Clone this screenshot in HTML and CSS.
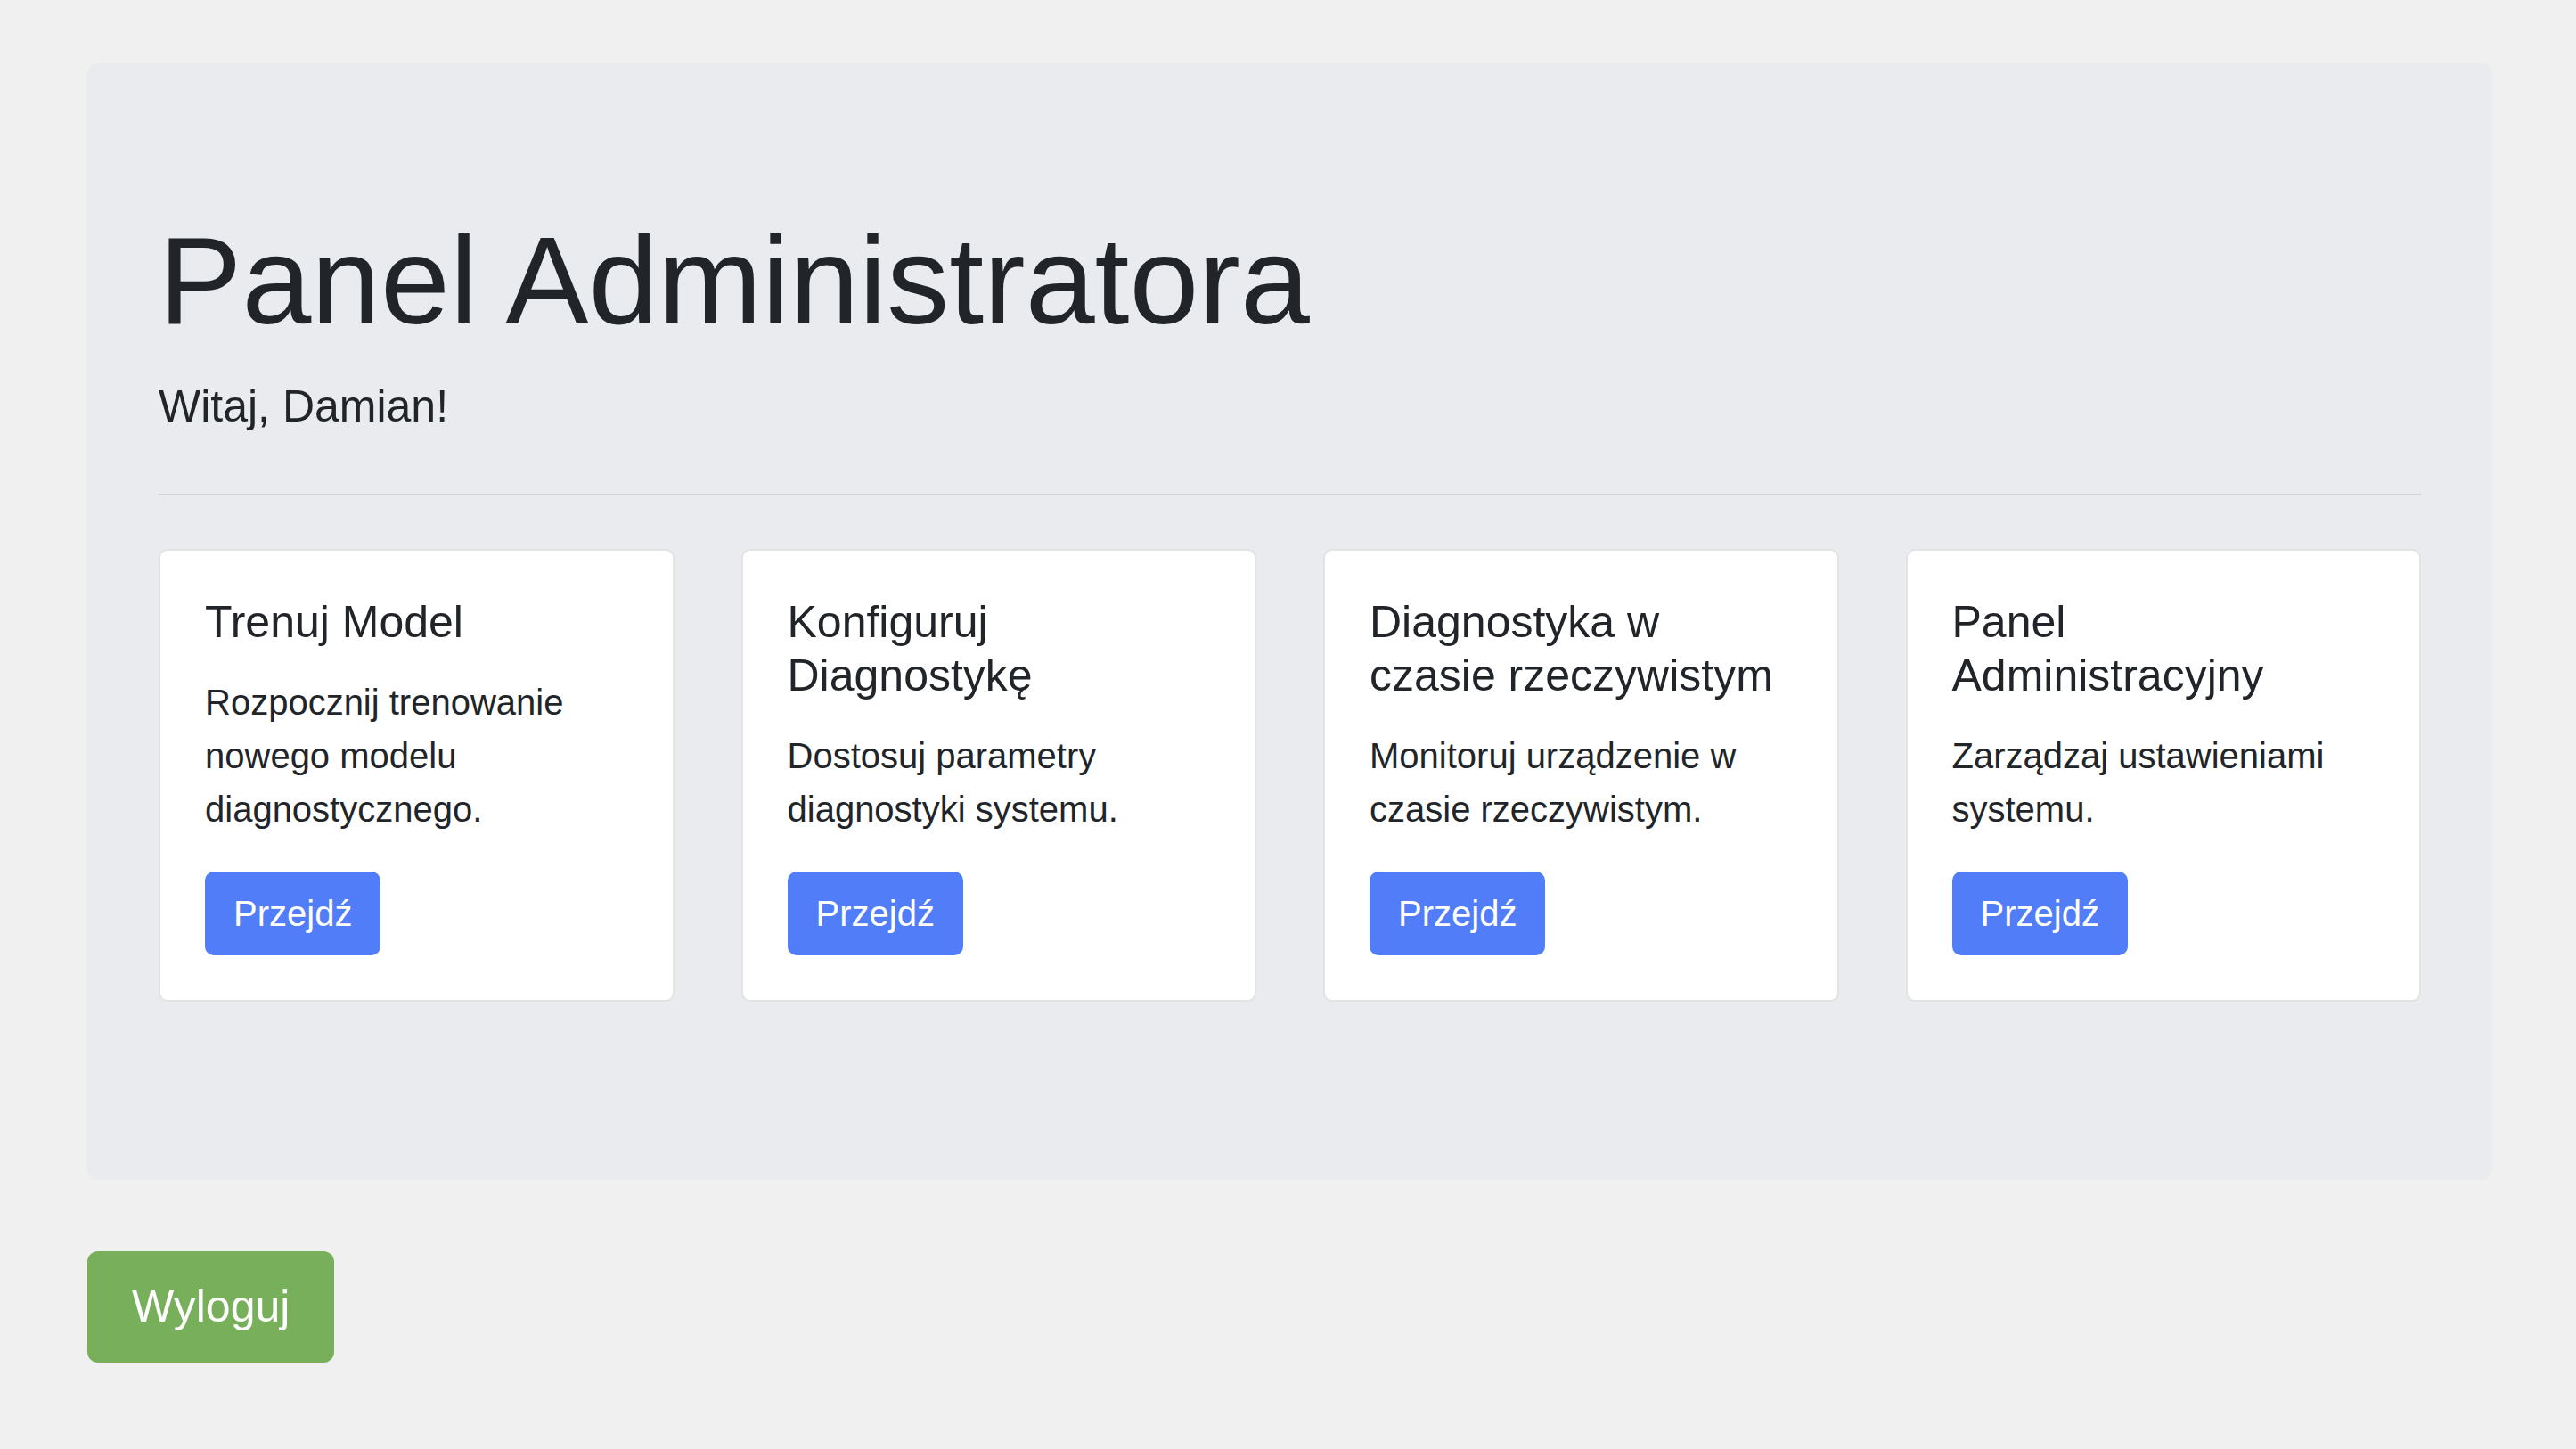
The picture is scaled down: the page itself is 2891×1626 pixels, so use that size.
FILE: index.html
```html
<!DOCTYPE html>
<html lang="pl">
<head>
<meta charset="utf-8">
<title>Panel Administratora</title>
<link rel="stylesheet" href="styles.css">
</head>
<body>
<div class="page">
  <div class="jumbotron">
    <h1 class="display">Panel Administratora</h1>
    <p class="lead">Witaj, Damian!</p>
    <hr class="divider">
    <div class="cards">
      <div class="card">
        <h5 class="card-title">Trenuj Model</h5>
        <p class="card-text">Rozpocznij trenowanie nowego modelu diagnostycznego.</p>
        <a class="btn-primary" href="#">Przejdź</a>
      </div>
      <div class="card">
        <h5 class="card-title">Konfiguruj Diagnostykę</h5>
        <p class="card-text">Dostosuj parametry diagnostyki systemu.</p>
        <a class="btn-primary" href="#">Przejdź</a>
      </div>
      <div class="card">
        <h5 class="card-title">Diagnostyka w czasie rzeczywistym</h5>
        <p class="card-text">Monitoruj urządzenie w czasie rzeczywistym.</p>
        <a class="btn-primary" href="#">Przejdź</a>
      </div>
      <div class="card">
        <h5 class="card-title">Panel Administracyjny</h5>
        <p class="card-text">Zarządzaj ustawieniami systemu.</p>
        <a class="btn-primary" href="#">Przejdź</a>
      </div>
    </div>
  </div>
  <a class="btn-logout" href="#">Wyloguj</a>
</div>
</body>
</html>
```

FILE: styles.css
```css
html, body {
  margin: 0;
  padding: 0;
}

body {
  background: #f0f0f0;
  color: #212529;
  font-family: "Liberation Sans", Arial, sans-serif;
  font-size: 40px;
  line-height: 1.5;
}

.page {
  padding: 71px 94px 60px 98px;
}

.jumbotron {
  background: #e9ebee;
  border-radius: 12px;
  padding: 160px 80px;
  margin-bottom: 80px;
}

.display {
  font-size: 140px;
  font-weight: 400;
  line-height: 168px;
  margin: 0 0 20px;
}

.lead {
  font-size: 50px;
  line-height: 75px;
  margin: 0 0 40px;
}

.divider {
  border: 0;
  border-top: 2px solid rgba(0, 0, 0, 0.1);
  height: 0;
  margin: 60px 0;
}

.cards {
  display: grid;
  grid-template-columns: repeat(4, 1fr);
  column-gap: 75px;
  margin-bottom: 40px;
}

.card {
  background: #fff;
  border: 2px solid rgba(0, 0, 0, 0.11);
  border-radius: 10px;
  padding: 50px;
  display: flex;
  flex-direction: column;
  align-items: flex-start;
}

.card-title {
  font-size: 50px;
  font-weight: 400;
  line-height: 60px;
  margin: 0 0 30px;
}

.card-text {
  font-size: 40px;
  line-height: 60px;
  margin: 0 0 40px;
}

.btn-primary {
  display: inline-block;
  background: #517ef8;
  border: 2px solid #517ef8;
  border-radius: 10px;
  color: #fff;
  font-size: 40px;
  line-height: 60px;
  padding: 15px 30px;
  text-decoration: none;
}

.btn-logout {
  display: inline-block;
  background: #78af5a;
  border-radius: 12px;
  color: #fff;
  font-size: 50px;
  line-height: 75px;
  padding: 25px 50px;
  text-decoration: none;
}
```
